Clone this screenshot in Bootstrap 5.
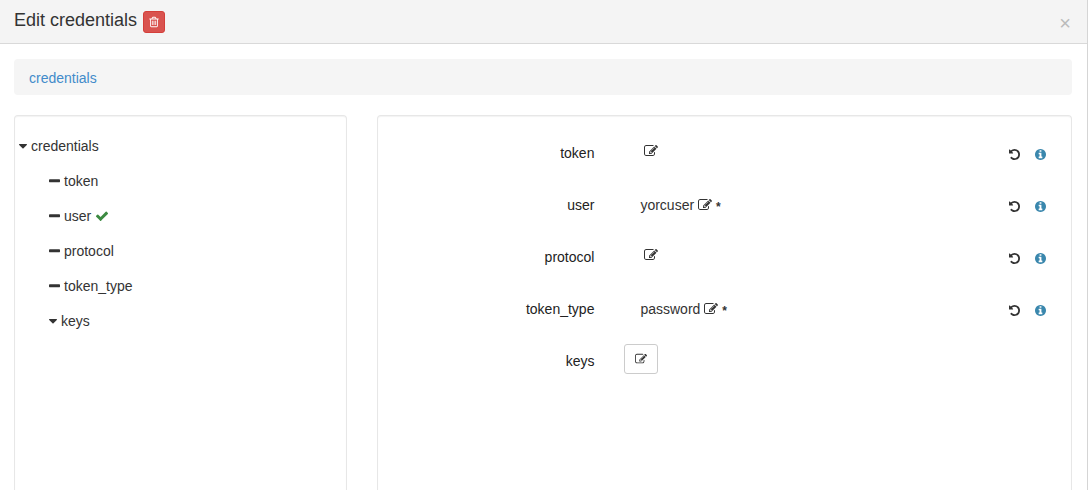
<!DOCTYPE html>
<html lang="en">
<head>
<meta charset="utf-8">
<meta name="viewport" content="width=device-width, initial-scale=1">
<title>Edit credentials</title>
<link href="https://cdn.jsdelivr.net/npm/bootstrap@5.3.0/dist/css/bootstrap.min.css" rel="stylesheet">
<style>
  body { font-family: "Liberation Sans", Arial, sans-serif; font-size: 14px; line-height: 20px; color: #333; background: #fff; }
  .dialog { border-right: 1px solid #d5d5d5; }
  .dialog-head { background: #f4f4f4; border-bottom: 1px solid #d9d9d9; padding: 10px 16px 10px 14px; }
  .dialog-title { gap: 6px; }
  .dialog-head h1 { font-size: 18px; line-height: 20px; }
  .ico { width: 14px; height: 14px; fill: currentColor; display: block; flex: none; }
  .ico-sm { width: 12px; height: 12px; }
  .ico-xs { width: 11px; height: 11px; }
  .ico-caret { width: 8px; height: 14px; }
  .ico-minus { width: 11px; height: 14px; }
  .btn-trash { background: #d9534f; border: 1px solid #d43f3a; color: #fff; border-radius: 3px; padding: 4px; margin-top: 1px; }
  .btn-icon { background: none; border: 0; padding: 0; color: #333; }
  .btn-x { color: #bbb; font-size: 20px; line-height: 20px; padding: 2px 0 0; }
  .dialog-main { padding: 15px 15px 0 14px; }
  .crumbs { background: #f5f5f5; border-radius: 4px; padding: 9px 15px 7px; margin-bottom: 20px; }
  .crumbs a { color: #428bca; text-decoration: none; }
  .panels { --bs-gutter-x: 30px; }
  .pane { border: 1px solid #e7e7e7; border-bottom: 0; border-radius: 4px 4px 0 0; box-shadow: inset 0 1px 1px rgba(0,0,0,.05); }
  .tree { padding-top: 12px; }
  .props { padding: 11px 0 0 1px; }
  .tree-row { display: flex; align-items: center; gap: 4px; height: 35px; padding-left: 4px; }
  .tree ul { padding-left: 30px; }
  .ok { color: #3c8a41; }
  .prop { --bs-gutter-x: 30px; min-height: 52px; }
  .prop label { color: #222; }
  .prop-value { padding-left: 16px; gap: 4px; }
  .raised { padding-bottom: 5px; }
  .req { font-size: 12px; font-weight: 700; line-height: 14px; padding-top: 4px; }
  .btn-info-dot { color: #3a87ad; }
  .btn-keys { background: #fff; border: 1px solid #ccc; border-radius: 3px; padding: 8px 10px; color: #333; }
  .actions { gap: 15px; padding-top: 3px; padding-right: 25px; }
</style>
</head>
<body>
<svg class="d-none" aria-hidden="true">
  <symbol id="edit" viewBox="0 0 1792 1792"><path d="M888 1184l116-116-152-152-116 116v56h96v96h56zm440-720q-16-16-33 1l-350 350q-17 17-1 33t33-1l350-350q17-17 1-33zm80 594v190q0 119-84.500 203.500t-203.500 84.500h-832q-119 0-203.500-84.500t-84.500-203.500v-832q0-119 84.500-203.500t203.500-84.500h832q63 0 117 25 15 7 18 23 3 17-9 29l-49 49q-14 14-32 8-23-6-45-6h-832q-66 0-113 47t-47 113v832q0 66 47 113t113 47h832q66 0 113-47t47-113v-126q0-13 9-22l64-64q15-15 35-7t20 29zm-96-738l288 288-672 672h-288v-288zm444 132l-92 92-288-288 92-92q28-28 68-28t68 28l152 152q28 28 28 68t-28 68z"/></symbol>
  <symbol id="check" viewBox="0 0 1792 1792"><path d="M1671 566q0 40-28 68l-724 724-136 136q-28 28-68 28t-68-28l-136-136-362-362q-28-28-28-68t28-68l136-136q28-28 68-28t68 28l294 295 656-657q28-28 68-28t68 28l136 136q28 28 28 68z"/></symbol>
  <symbol id="minus" viewBox="192 0 1408 1792"><path d="M1600 768v192q0 40-28 68t-68 28h-1216q-40 0-68-28t-28-68v-192q0-40 28-68t68-28h1216q40 0 68 28t28 68z"/></symbol>
  <symbol id="caret" viewBox="0 0 8 14"><path d="M.5 5h7q.8.200.3.900l-3.300 3.300q-.500.400-1 0l-3.300-3.300q-.500-.7.300-.9z"/></symbol>
  <symbol id="info" viewBox="128 128 1536 1536"><path d="M1152 1376v-160q0-14-9-23t-23-9h-96v-512q0-14-9-23t-23-9h-320q-14 0-23 9t-9 23v160q0 14 9 23t23 9h96v320h-96q-14 0-23 9t-9 23v160q0 14 9 23t23 9h448q14 0 23-9t9-23zm-128-896v-160q0-14-9-23t-23-9h-192q-14 0-23 9t-9 23v160q0 14 9 23t23 9h192q14 0 23-9t9-23zm640 416q0 209-103 385.500t-279.500 279.500-385.500 103-385.500-103-279.500-279.500-103-385.500 103-385.500 279.500-279.500 385.500-103 385.500 103 279.500 279.500 103 385.500z"/></symbol>
  <symbol id="undo" viewBox="128 128 1536 1536"><path d="M1664 896q0 156-61 298t-164 245-245 164-298 61q-172 0-327-72.500t-264-204.500q-7-10-6.500-22.500t8.500-20.500l137-138q10-9 25-9 16 2 23 12 73 95 179 147t225 52q104 0 198.500-40.500t163.500-109.500 109.500-163.500 40.500-198.500-40.500-198.500-109.500-163.500-163.500-109.500-198.500-40.500q-98 0-188 35.500t-160 101.500l137 138q31 30 14 69-17 40-59 40h-448q-26 0-45-19t-19-45v-448q0-42 40-59 39-17 69 14l130 129q107-101 244.500-156.500t284.500-55.500q156 0 298 61t245 164 164 245 61 298z"/></symbol>
  <symbol id="trash" viewBox="0 0 1792 1792"><path d="M704 736v576q0 14-9 23t-23 9h-64q-14 0-23-9t-9-23v-576q0-14 9-23t23-9h64q14 0 23 9t9 23zm256 0v576q0 14-9 23t-23 9h-64q-14 0-23-9t-9-23v-576q0-14 9-23t23-9h64q14 0 23 9t9 23zm256 0v576q0 14-9 23t-23 9h-64q-14 0-23-9t-9-23v-576q0-14 9-23t23-9h64q14 0 23 9t9 23zm128 724v-948h-896v948q0 22 7 40.500t14.500 27 10.500 8.500h832q3 0 10.500-8.500t14.500-27 7-40.500zm-672-1076h448l-48-117q-7-9-17-11h-317q-10 2-17 11zm928 32v64q0 14-9 23t-23 9h-96v948q0 83-47 143.500t-113 60.500h-832q-66 0-113-58.500t-47-141.500v-952h-96q-14 0-23-9t-9-23v-64q0-14 9-23t23-9h309l70-167q15-37 54-63t79-26h320q40 0 79 26t54 63l70 167h309q14 0 23 9t9 23z"/></symbol>
</svg>

<div class="dialog d-flex flex-column min-vh-100">
  <header class="dialog-head d-flex justify-content-between align-items-center">
    <div class="dialog-title d-flex align-items-start">
      <h1 class="m-0 fw-normal">Edit credentials</h1>
      <button type="button" class="btn-trash" aria-label="Delete"><svg class="ico ico-sm"><use href="#trash"/></svg></button>
    </div>
    <button type="button" class="btn-icon btn-x" aria-label="Close">×</button>
  </header>

  <main class="dialog-main d-flex flex-column flex-grow-1">
    <nav class="crumbs" aria-label="Breadcrumb"><a href="#">credentials</a></nav>

    <div class="row panels flex-grow-1">
      <div class="col-4 d-flex">
        <div class="pane tree flex-grow-1">
          <ul class="list-unstyled m-0 p-0">
            <li>
              <div class="tree-row"><button type="button" class="btn-icon" aria-label="Collapse credentials"><svg class="ico ico-caret"><use href="#caret"/></svg></button><span>credentials</span></div>
              <ul class="list-unstyled m-0">
                <li class="tree-row"><svg class="ico ico-minus"><use href="#minus"/></svg><span>token</span></li>
                <li class="tree-row"><svg class="ico ico-minus"><use href="#minus"/></svg><span>user</span><svg class="ico ok"><use href="#check"/></svg></li>
                <li class="tree-row"><svg class="ico ico-minus"><use href="#minus"/></svg><span>protocol</span></li>
                <li class="tree-row"><svg class="ico ico-minus"><use href="#minus"/></svg><span>token_type</span></li>
                <li class="tree-row"><button type="button" class="btn-icon" aria-label="Collapse keys"><svg class="ico ico-caret"><use href="#caret"/></svg></button><span>keys</span></li>
              </ul>
            </li>
          </ul>
        </div>
      </div>

      <div class="col-8 d-flex">
        <div class="pane props flex-grow-1">
          <div class="row prop mx-0 align-items-center">
            <div class="col-4 text-end"><label for="p-token">token</label></div>
            <div class="col d-flex"><div class="prop-value raised d-flex align-items-center"><button id="p-token" type="button" class="btn-icon ms-1" aria-label="Edit token"><svg class="ico"><use href="#edit"/></svg></button></div></div>
            <div class="col-auto d-flex actions"><button type="button" class="btn-icon" aria-label="Reset token"><svg class="ico ico-xs"><use href="#undo"/></svg></button><button type="button" class="btn-icon btn-info-dot" aria-label="About token"><svg class="ico ico-xs"><use href="#info"/></svg></button></div>
          </div>
          <div class="row prop mx-0 align-items-center">
            <div class="col-4 text-end"><label for="p-user">user</label></div>
            <div class="col d-flex"><div class="prop-value d-flex align-items-center"><span>yorcuser</span><button id="p-user" type="button" class="btn-icon" aria-label="Edit user"><svg class="ico"><use href="#edit"/></svg></button><span class="req">*</span></div></div>
            <div class="col-auto d-flex actions"><button type="button" class="btn-icon" aria-label="Reset user"><svg class="ico ico-xs"><use href="#undo"/></svg></button><button type="button" class="btn-icon btn-info-dot" aria-label="About user"><svg class="ico ico-xs"><use href="#info"/></svg></button></div>
          </div>
          <div class="row prop mx-0 align-items-center">
            <div class="col-4 text-end"><label for="p-protocol">protocol</label></div>
            <div class="col d-flex"><div class="prop-value raised d-flex align-items-center"><button id="p-protocol" type="button" class="btn-icon ms-1" aria-label="Edit protocol"><svg class="ico"><use href="#edit"/></svg></button></div></div>
            <div class="col-auto d-flex actions"><button type="button" class="btn-icon" aria-label="Reset protocol"><svg class="ico ico-xs"><use href="#undo"/></svg></button><button type="button" class="btn-icon btn-info-dot" aria-label="About protocol"><svg class="ico ico-xs"><use href="#info"/></svg></button></div>
          </div>
          <div class="row prop mx-0 align-items-center">
            <div class="col-4 text-end"><label for="p-type">token_type</label></div>
            <div class="col d-flex"><div class="prop-value d-flex align-items-center"><span>password</span><button id="p-type" type="button" class="btn-icon" aria-label="Edit token_type"><svg class="ico"><use href="#edit"/></svg></button><span class="req">*</span></div></div>
            <div class="col-auto d-flex actions"><button type="button" class="btn-icon" aria-label="Reset token_type"><svg class="ico ico-xs"><use href="#undo"/></svg></button><button type="button" class="btn-icon btn-info-dot" aria-label="About token_type"><svg class="ico ico-xs"><use href="#info"/></svg></button></div>
          </div>
          <div class="row prop mx-0 align-items-center">
            <div class="col-4 text-end"><label for="p-keys">keys</label></div>
            <div class="col d-flex raised"><button id="p-keys" type="button" class="btn-keys" aria-label="Edit keys"><svg class="ico ico-sm"><use href="#edit"/></svg></button></div>
          </div>
        </div>
      </div>
    </div>
  </main>
</div>
<script src="https://cdn.jsdelivr.net/npm/bootstrap@5.3.0/dist/js/bootstrap.bundle.min.js"></script>
</body>
</html>
